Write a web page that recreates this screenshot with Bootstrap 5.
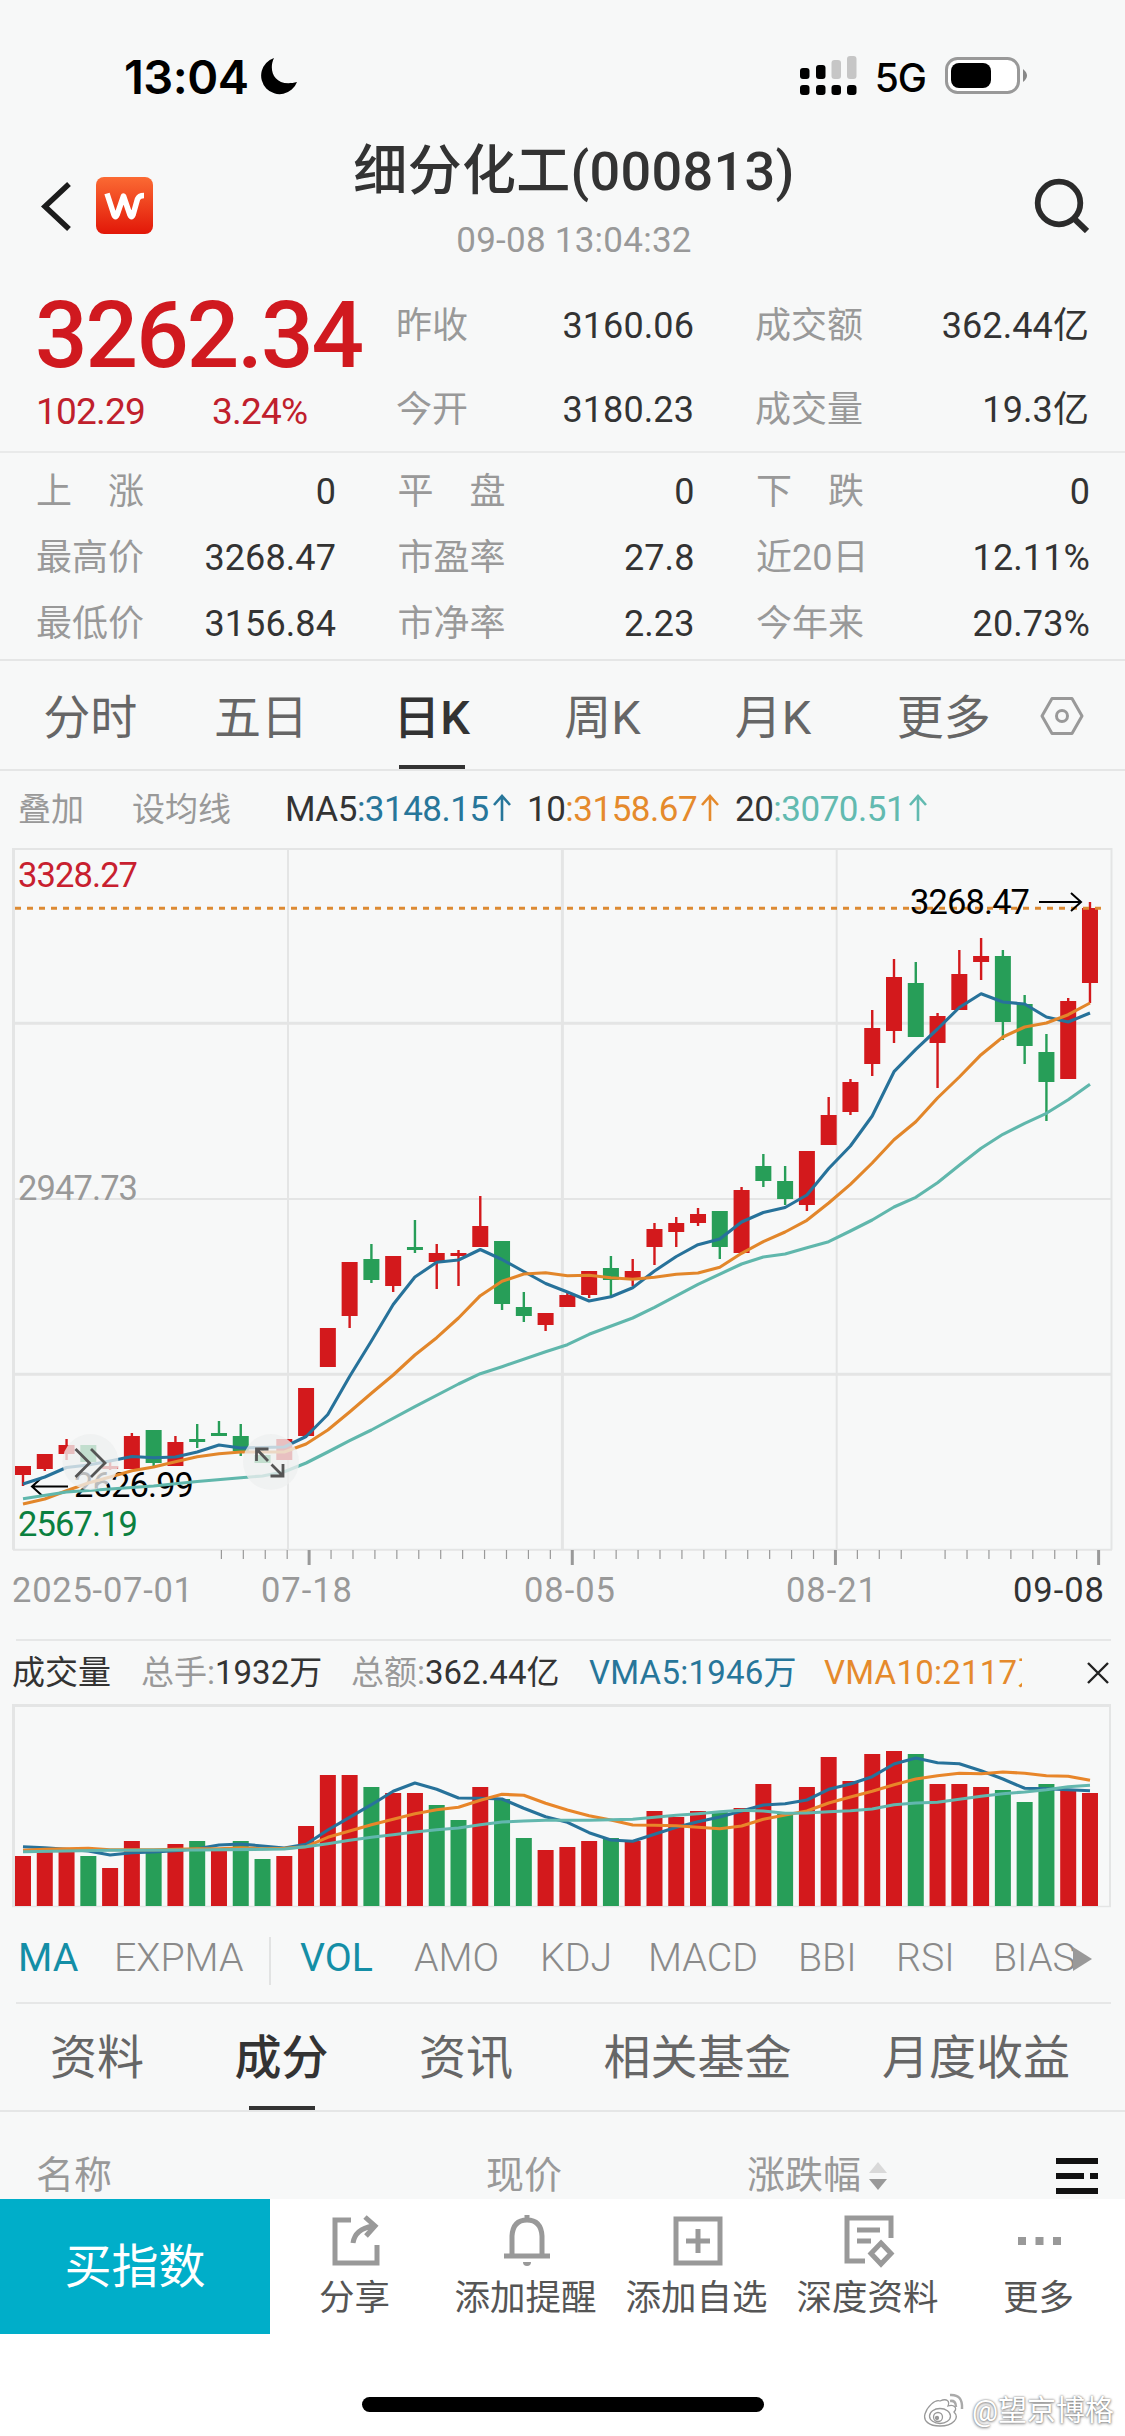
<!DOCTYPE html>
<html lang="zh-CN">
<head>
<meta charset="utf-8">
<meta name="viewport" content="width=device-width, initial-scale=1">
<title>细分化工(000813)</title>
<link href="https://cdn.jsdelivr.net/npm/bootstrap@5.3.0/dist/css/bootstrap.min.css" rel="stylesheet">
<style>
  body { width: 1125px; height: 2436px; background: #f7f8f8; color: #333; font-family: Roboto, "Noto Sans CJK SC", sans-serif; line-height: 1; overflow: hidden; }
  body > * { flex: none; }
  svg { display: block; flex: none; }
  .status-row { height: 120px; padding: 0 97px 0 124px; font-family: Inter, sans-serif; color: #000; }
  .clock { font-size: 47px; font-weight: 600; line-height: 60px; margin-top: 47px; letter-spacing: -.5px; }
  .net { font-size: 39px; font-weight: 500; line-height: 60px; margin-top: 48px; letter-spacing: -1px; }
  .title-row { height: 152px; padding: 0 36px 0 40px; }
  .title-main { font-size: 54px; font-weight: 500; line-height: 64px; margin-top: 20px; letter-spacing: .3px; }
  .title-time { font-size: 35px; line-height: 44px; color: #999; margin-top: 15px; letter-spacing: .25px; }
  .quote { height: 181px; padding: 0 34px 0 36px; border-bottom: 2px solid #e9eaea; }
  .grid3 { display: grid; grid-template-columns: 300px 297px 334px; column-gap: 62px; font-size: 36px; }
  .grid3 { column-gap: 61.5px; }
  .quote-grid { display: grid; grid-template-columns: 298px 334px; column-gap: 61px; grid-auto-rows: 84px; font-size: 36px; padding-top: 12px; }
  .price { font-size: 92.5px; font-weight: 500; line-height: 92px; color: #d0191f; margin: 18px 0 0 -1px; letter-spacing: -2px; width: 361px; white-space: nowrap; }
  .chg { font-size: 37px; line-height: 46px; color: #c0202c; margin-top: 7px; letter-spacing: -.8px; }
  .dim { color: #999; }
  .num { color: #333; letter-spacing: .1px; }
  .stats { height: 208px; padding: 6px 34px 0 36px; grid-auto-rows: 66px; border-bottom: 2px solid #e5e6e6; }
  .ktabs { height: 110px; padding-left: 5px; font-size: 47px; color: #666; border-bottom: 2px solid #e5e6e6; }
  .ktab { width: 170.7px; height: 108px; line-height: 114px; text-align: center; position: relative; flex: none; }
  .on { color: #333; font-weight: 500; }
  .on::after { content: ""; position: absolute; left: 50%; bottom: 0; width: 66px; height: 4px; margin-left: -33px; background: #333; }
  .ma-row { height: 77px; padding-left: 18px; font-size: 33px; line-height: 77px; white-space: nowrap; }
  .ma-num { font-size: 35px; letter-spacing: -.5px; }
  .ma-num svg { vertical-align: baseline; margin-left: 1px; }
  .c-blue { color: #27769a; } .c-org { color: #e58a2c; } .c-teal { color: #62bab0; }
  .hr-in { margin: 0 14px 0 16px; height: 2px; background: #e6e7e7; }
  .vol-row { height: 63px; padding: 0 16px 0 12px; font-size: 33px; line-height: 66px; white-space: nowrap; }
  .vol-clip { width: 198px; overflow: hidden; }
  .vol-row .c-blue, .vol-row .c-org { letter-spacing: .25px; }
  .ind-row { height: 93px; padding-left: 18px; font-size: 39.3px; font-weight: 300; line-height: 98px; color: #8a8a8a; white-space: nowrap; }
  .ind-on { color: #148ea6; font-weight: 400; }
  .btabs { height: 108px; padding-left: 50px; gap: 90.5px; font-size: 47px; line-height: 107px; color: #666; border-bottom: 2px solid #e5e6e6; white-space: nowrap; }
  .btabs > div { position: relative; height: 106px; }
  .list-head { height: 87px; font-size: 38px; line-height: 127px; color: #999; padding: 0 27px 0 36px; overflow: hidden; white-space: nowrap; }
  .actions { height: 237px; background: #fff; position: relative; }
  .buy { width: 270px; height: 135px; line-height: 135px; background: #00aec9; color: #fff; font-size: 47px; text-align: center; }
  .act { width: 171px; font-size: 35.5px; color: #555; text-align: center; white-space: nowrap; padding-top: 13px; }
  .act svg { margin: 0 auto; }
  .act div { line-height: 44px; margin: 8px -9px 0 -11px; }
  .home-bar { position: absolute; left: 362px; top: 198px; width: 402px; height: 15px; border-radius: 8px; background: #000; }
  .wm { position: absolute; right: 11px; top: 190px; font-size: 29px; line-height: 44px; color: #fff; gap: 7px; text-shadow: 0 0 2px #777, 0 1px 3px #888; white-space: nowrap; }
</style>
</head>
<body class="d-flex flex-column">
<div class="status-row d-flex align-items-start">
  <div class="clock">13:04</div>
  <svg width="38" height="40" viewBox="0 0 38 40" style="margin:57px 0 0 11px"><path d="M14 1C8 13 14 31 37 25A18.5 18.5 0 1 1 14 1Z"/></svg>
  <svg class="ms-auto" width="58" height="41" viewBox="0 0 58 41" style="margin-top:55px"><g><rect x="1" y="13" width="9.5" height="11" rx="3"/><rect x="17" y="10" width="9.5" height="14" rx="3"/><rect x="32.500" y="5" width="9.500" height="19" rx="3" fill="#c6c6c6"/><rect x="48" y="1" width="9.500" height="23" rx="3" fill="#c6c6c6"/><rect x="1" y="30" width="9.5" height="10" rx="3"/><rect x="17" y="30" width="9.5" height="10" rx="3"/><rect x="32.500" y="30" width="9.5" height="10" rx="3"/><rect x="48" y="30" width="9.5" height="10" rx="3"/></g></svg>
  <div class="net" style="margin-left:18px">5G</div>
  <svg width="83" height="40" viewBox="0 0 83 40" style="margin:56px 0 0 19px"><rect x="1.500" y="2.500" width="72" height="34" rx="11" fill="#fff" stroke="#999" stroke-width="3"/><rect x="6" y="7" width="40" height="25" rx="8"/><path d="M78 13q8 6.500 0 13z" fill="#888"/></svg>
</div>

<div class="title-row d-flex justify-content-between">
  <div class="d-flex" style="width:254px">
    <svg width="34" height="54" viewBox="0 0 34 54" style="margin-top:59px"><path d="M29 5L5 27.500L29 50" fill="none" stroke="#1c1c1c" stroke-width="5.500"/></svg>
    <svg width="58" height="58" viewBox="0 0 58 58" style="margin:57px 0 0 22px"><defs><linearGradient id="lg" x2="0" y2="1"><stop offset="0" stop-color="#fb6a33"/><stop offset="1" stop-color="#e21708"/></linearGradient></defs><rect width="57" height="57" rx="8" fill="url(#lg)"/><path d="M11 16.500L18 38Q19.500 41.500 21 38L27.500 19L34 38Q35.500 41.500 37 38L41.500 22Q43 18.500 48 18.500" fill="none" stroke="#fff" stroke-width="5.500" stroke-linejoin="round"/></svg>
  </div>
  <div class="text-center">
    <div class="title-main">细分化工(000813)</div>
    <div class="title-time">09-08 13:04:32</div>
  </div>
  <div class="d-flex justify-content-end" style="width:235px"><svg width="56" height="56" viewBox="0 0 56 56" style="margin-top:57px"><circle cx="26" cy="26" r="21.300" fill="none" stroke="#2b2b2b" stroke-width="5.800"/><path d="M40.500 41L54 54" stroke="#2b2b2b" stroke-width="6"/></svg></div>
</div>

<div class="quote d-flex">
  <div class="price-col">
    <div class="price">3262.34</div>
    <div class="chg d-flex"><span style="width:176px">102.29</span><span>3.24%</span></div>
  </div>
  <div class="quote-grid">
    <div class="d-flex align-items-center justify-content-between"><span class="dim">昨收</span><span class="num">3160.06</span></div>
    <div class="d-flex align-items-center justify-content-between"><span class="dim">成交额</span><span class="num">362.44亿</span></div>
    <div class="d-flex align-items-center justify-content-between"><span class="dim">今开</span><span class="num">3180.23</span></div>
    <div class="d-flex align-items-center justify-content-between"><span class="dim">成交量</span><span class="num">19.3亿</span></div>
  </div>
</div>

<div class="stats grid3">
  <div class="d-flex align-items-center justify-content-between"><span class="dim">上　涨</span><span class="num">0</span></div>
  <div class="d-flex align-items-center justify-content-between"><span class="dim">平　盘</span><span class="num">0</span></div>
  <div class="d-flex align-items-center justify-content-between"><span class="dim">下　跌</span><span class="num">0</span></div>
  <div class="d-flex align-items-center justify-content-between"><span class="dim">最高价</span><span class="num">3268.47</span></div>
  <div class="d-flex align-items-center justify-content-between"><span class="dim">市盈率</span><span class="num">27.8</span></div>
  <div class="d-flex align-items-center justify-content-between"><span class="dim">近20日</span><span class="num">12.11%</span></div>
  <div class="d-flex align-items-center justify-content-between"><span class="dim">最低价</span><span class="num">3156.84</span></div>
  <div class="d-flex align-items-center justify-content-between"><span class="dim">市净率</span><span class="num">2.23</span></div>
  <div class="d-flex align-items-center justify-content-between"><span class="dim">今年来</span><span class="num">20.73%</span></div>
</div>

<div class="ktabs d-flex">
  <div class="ktab">分时</div><div class="ktab">五日</div><div class="ktab on">日K</div><div class="ktab">周K</div><div class="ktab">月K</div><div class="ktab">更多</div>
  <svg width="44" height="40" viewBox="0 0 44 40" style="margin:35px 0 0 11px"><path d="M12 2.500H32L42 20L32 37.500H12L2 20Z" fill="none" stroke="#999" stroke-width="3" stroke-linejoin="round"/><circle cx="22" cy="20" r="5.500" fill="none" stroke="#999" stroke-width="3"/></svg>
</div>

<div class="ma-row d-flex">
  <span class="dim" style="width:114px">叠加</span><span class="dim" style="width:153px">设均线</span>
  <span class="ma-num" style="width:242px">MA5<span class="c-blue">:3148.15<svg class="d-inline-block" width="22" height="27" viewBox="0 0 22 27"><path d="M12 27V2M4 11L12 2L20 11" fill="none" stroke="currentColor" stroke-width="2.600"/></svg></span></span>
  <span class="ma-num" style="width:208px">10<span class="c-org">:3158.67<svg class="d-inline-block" width="22" height="27" viewBox="0 0 22 27"><path d="M12 27V2M4 11L12 2L20 11" fill="none" stroke="currentColor" stroke-width="2.600"/></svg></span></span>
  <span class="ma-num">20<span class="c-teal">:3070.51<svg class="d-inline-block" width="22" height="27" viewBox="0 0 22 27"><path d="M12 27V2M4 11L12 2L20 11" fill="none" stroke="currentColor" stroke-width="2.600"/></svg></span></span>
</div>

<svg id="kchart" width="1125" height="791" viewBox="0 848 1125 791"></svg>
<div class="hr-in"></div>
<div class="vol-row d-flex align-items-center">
  <span style="width:129px">成交量</span>
  <span style="width:210px"><span class="dim">总手:</span>1932万</span>
  <span style="width:238px"><span class="dim">总额:</span>362.44亿</span>
  <span class="c-blue" style="width:235px">VMA5:1946万</span>
  <span class="c-org vol-clip">VMA10:2117万</span>
  <svg class="ms-auto" width="22" height="22" viewBox="0 0 22 22"><path d="M1 1L21 21M21 1L1 21" stroke="#222" stroke-width="2.400"/></svg>
</div>
<svg id="vchart" width="1125" height="205" viewBox="0 1704 1125 205"></svg>
<div class="ind-row d-flex">
  <span class="ind-on" style="width:96px">MA</span><span style="width:155px">EXPMA</span>
  <span style="width:2px;height:48px;margin-top:28px;background:#e2e3e3"></span>
  <span class="ind-on" style="width:114px;margin-left:29px">VOL</span><span style="width:126px">AMO</span><span style="width:108px">KDJ</span><span style="width:150px">MACD</span><span style="width:98px">BBI</span><span style="width:97px">RSI</span><span style="width:80px">BIAS</span>
  <svg width="19" height="24" viewBox="0 0 19 24" style="margin-top:38px"><path d="M0 0L19 12L0 24Z" fill="#999"/></svg>
</div>
<div class="hr-in"></div>
<div class="btabs d-flex">
  <div>资料</div><div class="on">成分</div><div>资讯</div><div>相关基金</div><div>月度收益</div>
</div>
<div class="list-head d-flex">
  <span style="width:450px">名称</span><span style="width:261px">现价</span><span>涨跌幅</span>
  <svg width="18" height="28" viewBox="0 0 18 28" style="margin:50px 0 0 8px"><path d="M0 11L9 0L18 11Z" fill="#d9d9d9"/><path d="M0 17H18L9 28Z" fill="#999"/></svg>
  <svg class="ms-auto" width="42" height="36" viewBox="0 0 42 36" style="margin-top:46px"><path d="M0 3H42M0 18H28M34 18H42M0 33H42" stroke="#111" stroke-width="6"/></svg>
</div>
<div class="actions d-flex align-items-start">
  <div class="buy">买指数</div>
  <div class="act"><svg width="54" height="56" viewBox="0 0 54 56" fill="none" stroke="#999" stroke-width="5"><path d="M22 8H6V51H48V33"/><path d="M24 31Q26 17 44 14M36 5L46 14L37 24"/></svg><div>分享</div></div>
  <div class="act"><svg width="54" height="56" viewBox="0 0 54 56" fill="none" stroke="#999" stroke-width="5"><path d="M12 43V24Q13 8 27 8T42 24V43M4 44H50M27 8V3"/><path d="M23 50H31Q31 54 27 54T23 50Z" fill="#999" stroke="none"/></svg><div>添加提醒</div></div>
  <div class="act"><svg width="54" height="56" viewBox="0 0 54 56" fill="none" stroke="#999" stroke-width="5"><path d="M5 7H49V51H5ZM15 29H39M27 17V41"/></svg><div>添加自选</div></div>
  <div class="act"><svg width="54" height="56" viewBox="0 0 54 56" fill="none" stroke="#999" stroke-width="5"><path d="M49 26V6H5V49H23M15 18H38M15 29H29M39 31L49 41.500L39 52L29 41.500Z"/></svg><div>深度资料</div></div>
  <div class="act"><svg width="54" height="56" viewBox="0 0 54 56" fill="#999"><path d="M5 25h8v8H5zM22.500 25h8v8h-8zM40 25h8v8h-8z"/></svg><div>更多</div></div>
  <div class="home-bar"></div>
  <div class="wm d-flex"><svg width="42" height="36" viewBox="0 0 42 36" style="margin-top:3px"><g fill="#fff" stroke="#999" stroke-width="1.300"><path d="M17 9C24 6 27 9 25 14C31 12 35 16 31 20C37 26 30 34 17 34C6 34 0 29 2 22C4 15 12 7 17 9Z"/><ellipse cx="17" cy="24" rx="10.500" ry="7.500"/><circle cx="15" cy="25" r="4.500"/><circle cx="14" cy="26" r="1.500" fill="#999"/></g><path d="M27 9Q33 8 33 15M27 3Q40 2 39 17" fill="none" stroke="#aaa" stroke-width="2.500"/></svg><span>@望京博格</span></div>
</div>

<script src="https://cdn.jsdelivr.net/npm/bootstrap@5.3.0/dist/js/bootstrap.bundle.min.js"></script>
<script>
  const RED = '#d3191c', GREEN = '#279e58', GRID = '#e4e5e5';
  const X = i => 23 + 21.775 * i;
  const rect = (x, y, w, h, f) => `<rect x="${x}" y="${y}" width="${w}" height="${h}" fill="${f}"/>`;
  const line = (x1, y1, x2, y2, c, w) => `<path d="M${x1} ${y1}L${x2} ${y2}" stroke="${c}" stroke-width="${w}" fill="none"/>`;
  const poly = (pts, c) => `<polyline points="${pts.map(p => X(p[0]).toFixed(1) + ',' + p[1]).join(' ')}" fill="none" stroke="${c}" stroke-width="3.1" stroke-linejoin="round"/>`;
  const seq = a => a.map((y, i) => [i, y]);
  const label = (x, y, len, c, t) => `<text x="${x}" y="${y}" font-size="34.500" fill="${c}" textLength="${len}">${t}</text>`;

  // high, body top, body bottom, low
  const candles = [[1466,1466,1475,1486],[1454,1454,1469,1471],[1439,1445,1454,1460],[1445,1445,1462,1464],[1462,1466,1469,1470],[1433,1436,1469,1469],[1430,1430,1463,1467],[1436,1442,1466,1466],[1424,1439,1442,1448],[1421,1433,1436,1436],[1424,1436,1451,1456],[1450,1455,1463,1463],[1439,1439,1460,1460],[1388,1388,1436,1436],[1328,1328,1367,1367],[1262,1262,1316,1328],[1244,1259,1280,1283],[1256,1256,1286,1292],[1220,1247,1250,1253],[1244,1253,1262,1289],[1250,1253,1256,1286],[1196,1226,1247,1247],[1241,1241,1304,1310],[1292,1307,1316,1322],[1313,1313,1325,1331],[1292,1295,1307,1307],[1271,1271,1295,1298],[1256,1268,1280,1297],[1259,1271,1278,1286],[1223,1229,1247,1265],[1217,1223,1232,1247],[1208,1214,1223,1226],[1211,1211,1247,1259],[1187,1190,1253,1253],[1154,1166,1181,1187],[1166,1181,1199,1205],[1151,1151,1205,1211],[1097,1115,1145,1145],[1079,1082,1112,1115],[1010,1028,1064,1076],[959,977,1031,1043],[962,983,1037,1037],[1013,1016,1043,1088],[950,974,1010,1010],[938,956,962,980],[950,956,1022,1040],[995,1004,1046,1064],[1034,1052,1082,1121],[998,1001,1079,1079],[902,908,983,1003]];
  const kColor = 'rrrgrrgrggggrrrrgrgrrrggrrrgrrrrgrggrrrrrgrrrgggrr';
  const ma5 = [1484,1477,1467.5,1465,1461,1456.5,1457.7,1457,1452,1445,1448,1447.5,1447,1436.5,1414.5,1376.5,1341,1304.5,1277,1262.3,1260,1249.5,1259.5,1271.5,1283.5,1292,1301,1296.7,1287.7,1271,1256.5,1244.7,1239,1222,1212.5,1207.5,1195,1168.5,1146,1116,1071.7,1049.3,1029,1007.5,993.7,1002,1004,1017,1022,1013];
  const ma10 = [1504,1499,1490.7,1483,1477,1470.7,1467,1461.7,1456.7,1453.7,1452,1452,1452,1444,1430,1412,1393.3,1375,1355,1337.7,1318,1295.7,1281.3,1274,1272.7,1275.7,1275.3,1277.7,1279.3,1277.3,1274.3,1273,1267.3,1253.3,1241.7,1232,1220.3,1203,1184.3,1163,1139.7,1121.7,1098,1077,1054.7,1037,1027,1023,1014.7,1003];
  const ma20 = [[0,1498.7],[2,1492],[4,1489],[6,1486],[8,1481.5],[10,1477.7],[11,1476],[12,1471.7],[13,1463],[14,1452],[15,1440.7],[16,1430],[18,1406.7],[20,1384],[21,1373.7],[22,1366.7],[24,1351.7],[25,1344.7],[26,1334.3],[28,1318],[29,1307.3],[31,1284.3],[33,1264],[34,1257],[35,1254],[36,1247.7],[37,1241.7],[38,1231],[39,1220],[40,1207],[41,1197.3],[42,1182.7],[43,1165.3],[44,1148.3],[45,1134.3],[46,1123.3],[47,1113.3],[48,1099.7],[49,1084.3]];

  let k = '';
  [[849,2],[1023.3,3],[1199,2],[1374.3,3],[1549.7,2]].forEach(([y, w]) => k += line(13, y, 1112, y, GRID, w));
  [[13.5,3],[288,2],[562.4,3],[836.7,2],[1111.5,2]].forEach(([x, w]) => k += line(x, 848, x, 1549.7, GRID, w));
  candles.forEach(([h, t, b, l], i) => {
    const c = kColor[i] === 'r' ? RED : GREEN;
    k += rect(X(i) - 1.2, h, 2.4, l - h, c) + rect(X(i) - 8, t, 16, b - t, c);
  });
  k += '<path d="M15 908.3H1101" stroke="#dd8a33" stroke-width="3" stroke-dasharray="6 6"/>';
  k += label(18, 887, 120, '#c8202f', '3328.27') + label(18, 1200, 120, '#999', '2947.73') + label(18, 1536, 120, '#0b8040', '2567.19');
  k += label(910, 914, 120, '#000', '3268.47') + label(74, 1497, 120, '#000', '2626.99');
  k += '<path d="M1039 902H1081M1071 893L1081 902L1071 911M68 1486.500H32M42 1477.500L32 1486.500L42 1495.500" fill="none" stroke="#000" stroke-width="2"/>';
  k += poly(seq(ma5), '#27729a') + poly(seq(ma10), '#e2862a') + poly(ma20, '#60b7ac');
  k += '<circle cx="90.500" cy="1462" r="28" fill="#eef0f0" fill-opacity=".78"/><circle cx="271" cy="1462" r="28" fill="#eef0f0" fill-opacity=".78"/>';
  k += '<path d="M75.500 1449L89.500 1463L75.500 1477M91 1449L105 1463L91 1477M256.500 1461V1449H268.500M256.500 1449L268 1461M283 1464V1476H270.500M283 1476L271.500 1464.500" fill="none" stroke="#555" stroke-width="2.800"/>';
  for (let i = 0; i <= 40; i++) {
    const x = 221.4 + 21.93 * i;
    if (i === 32) continue;
    k += (i === 4 || i === 16 || i === 28 || i === 40) ? line(x, 1550, x, 1565, '#999', 3) : line(x, 1550, x, 1559, '#999', 1.2);
  }
  k += label(12, 1602, 181, '#999', '2025-07-01') + label(261, 1602, 91, '#999', '07-18') + label(524, 1602, 91, '#999', '08-05') + label(786, 1602, 91, '#999', '08-21') + label(1013, 1602, 91, '#333', '09-08');
  document.getElementById('kchart').innerHTML = k;

  const vol = [1856,1850,1851,1856,1868,1841,1851,1844,1841,1850,1841,1859,1856,1826,1775,1775,1787,1793,1793,1805,1820,1787,1799,1838,1850,1847,1841,1838,1841,1811,1817,1811,1811,1808,1784,1814,1787,1757,1781,1754,1751,1754,1784,1784,1787,1790,1802,1784,1790,1793];
  const vColor = 'rrrgrrgrgrggrrrrgrrggrggrrrgrrrrgrrgrrrrrgrrrgggrr';
  const v5 = [1846.7,1847.7,1849.3,1851,1855,1852.7,1852,1850.7,1848.7,1845,1844,1846,1848,1844.3,1830,1817.3,1804.7,1791.3,1783,1789.3,1798,1798.3,1799,1808.3,1816.7,1822.3,1832.7,1840,1841.3,1834.3,1827.3,1821.7,1817,1811,1805,1803.7,1800,1789.3,1784,1776.7,1764,1758,1762.7,1763.7,1770.7,1779,1788.3,1788.7,1789.7,1790.7];
  const v10 = [1850.3,1849.3,1848.7,1848.3,1849.7,1849.7,1849.7,1849.3,1848.7,1848.7,1847.7,1848.7,1848.3,1846.7,1837.3,1831,1824.7,1819.3,1813.7,1809.7,1807.3,1800.3,1794.3,1795.3,1803.3,1810,1815.7,1820,1825,1825.3,1825.7,1827.3,1828.7,1826,1819.3,1815,1811,1803,1797,1791.3,1784.7,1779,1775.7,1773.3,1773.7,1772,1773.3,1775.7,1776.3,1780.3];
  const v20 = [[0,1851.7],[4,1850.3],[8,1850],[12,1849],[13,1846.7],[14,1843.7],[15,1840.3],[16,1837.3],[17,1834.7],[18,1832],[19,1829.7],[20,1828],[21,1824.7],[22,1822],[23,1821],[24,1820.3],[26,1820.3],[28,1819.3],[29,1817.3],[30,1815.3],[31,1813.7],[32,1811.7],[33,1810.3],[34,1811],[35,1813.3],[36,1813],[37,1811.7],[38,1810.7],[39,1809],[40,1804.7],[41,1803],[42,1802.3],[43,1799.3],[44,1796.3],[45,1793.7],[46,1792],[47,1789.7],[48,1786.7],[49,1785.3]];
  let v = line(12, 1705.5, 1111, 1705.5, GRID, 3) + line(13.5, 1704, 13.5, 1907, GRID, 3) + line(1110, 1704, 1110, 1907, GRID, 2) + line(12, 1906.5, 1111, 1906.5, GRID, 1.5);
  vol.forEach((y, i) => v += rect(X(i) - 8, y, 16, 1906 - y, vColor[i] === 'r' ? RED : GREEN));
  v += poly(seq(v5), '#27729a') + poly(seq(v10), '#e8862a') + poly(v20, '#62b7ae');
  document.getElementById('vchart').innerHTML = v;
</script>
</body>
</html>
